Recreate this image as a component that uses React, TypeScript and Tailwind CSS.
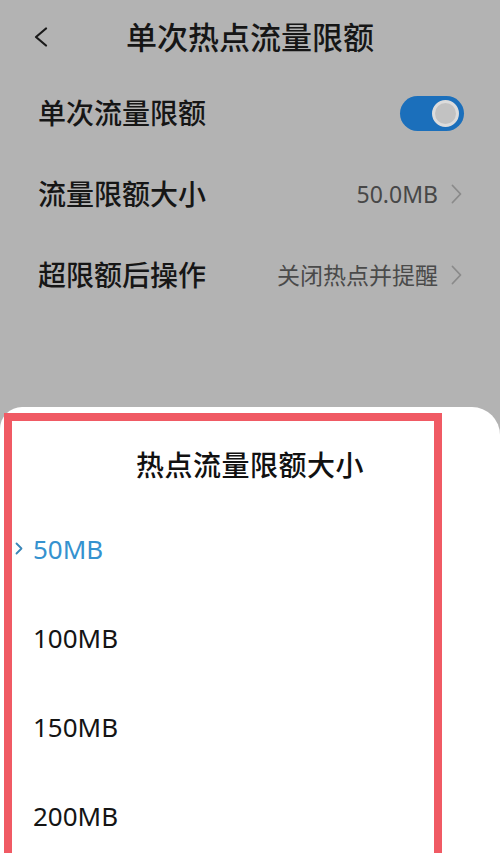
const font = { fontFamily: '"Noto Sans", "Noto Sans CJK SC", sans-serif' };

function Chevron({ className = '' }: { className?: string }) {
  return (
    <svg width="11" height="20" viewBox="0 0 11 20" className={className}>
      <polyline points="1.5,1.5 9.5,10 1.5,18.5" fill="none" stroke="currentColor" strokeWidth="1.8" strokeLinecap="round" strokeLinejoin="round" />
    </svg>
  );
}

function Toggle() {
  return (
    <div className="flex h-[35px] w-[64px] items-center justify-end rounded-full bg-[#1b6fbb] pr-[5px]">
      <div className="h-[27px] w-[27px] rounded-full border-[3px] border-[#dcdcdc] bg-[#c2c2c2]" />
    </div>
  );
}

const options = ['50MB', '100MB', '150MB', '200MB'];

export default function App() {
  const selected = '50MB';

  return (
    <div className="h-[853px] w-[500px] overflow-hidden bg-[#b3b3b3]" style={font}>
      {/* settings page, dimmed */}
      <div className="h-[407px] text-[#161616]">
        <div className="grid h-[73px] grid-cols-[1fr_auto_1fr] items-center">
          <div className="pl-[34px]">
            <svg width="14" height="20" viewBox="0 0 14 20">
              <polyline points="12,1.5 2,10 12,18.5" fill="none" stroke="#1a1a1a" strokeWidth="2.2" strokeLinecap="round" strokeLinejoin="round" />
            </svg>
          </div>
          <h1 className="text-[31px] font-medium leading-[40px]">单次热点流量限额</h1>
          <div />
        </div>

        <div className="flex h-[80px] items-center justify-between pl-[38px] pr-[36px]">
          <span className="text-[28px] font-medium leading-[36px]">单次流量限额</span>
          <Toggle />
        </div>

        <div className="flex h-[81px] items-center justify-between pl-[38px] pr-[38px]">
          <span className="text-[28px] font-medium leading-[36px]">流量限额大小</span>
          <div className="flex items-center gap-[13px] text-[#8a8a8a]">
            <span className="text-[23px] leading-[30px] text-[#474747]">50.0MB</span>
            <Chevron />
          </div>
        </div>

        <div className="flex h-[81px] items-center justify-between pl-[38px] pr-[38px]">
          <span className="text-[28px] font-medium leading-[36px]">超限额后操作</span>
          <div className="flex items-center gap-[13px] text-[#8a8a8a]">
            <span className="text-[23px] leading-[30px] text-[#4a4a4a]">关闭热点并提醒</span>
            <Chevron />
          </div>
        </div>
      </div>

      {/* bottom sheet */}
      <div className="h-[446px] rounded-tl-[22px] rounded-tr-[28px] bg-white pl-[4px] pt-[6px]">
        <div className="h-[460px] w-[438px] border-[8px] border-[#f05a64]">
          <div className="pb-[21px] pl-[54px] pt-[26px] text-center">
            <h2 className="text-[28px] font-medium leading-[36px] tracking-[0.5px] text-[#111]">热点流量限额大小</h2>
          </div>
          <ul>
            {options.map((opt) => {
              const active = opt === selected;
              return (
                <li key={opt} className="flex h-[89px] items-center">
                  <div className="w-[21px] pl-[3px]">
                    {active && (
                      <svg width="8" height="13" viewBox="0 0 8 13">
                        <polyline points="1.5,1.5 6.5,6.5 1.5,11.5" fill="none" stroke="#3a86b8" strokeWidth="1.8" strokeLinecap="round" strokeLinejoin="round" />
                      </svg>
                    )}
                  </div>
                  <span className={`text-[26px] leading-[34px] ${active ? 'text-[#3592cf]' : 'text-[#141414]'}`}>
                    {opt}
                  </span>
                </li>
              );
            })}
          </ul>
        </div>
      </div>
    </div>
  );
}
